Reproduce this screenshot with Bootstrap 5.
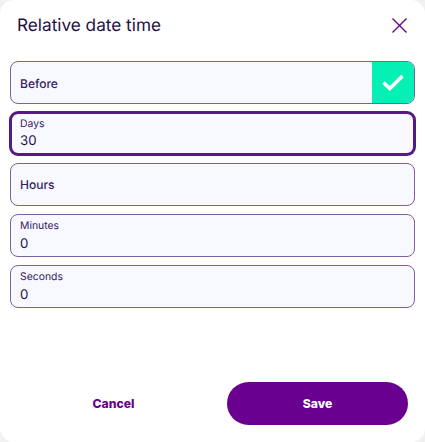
<!DOCTYPE html>
<html lang="en">
<head>
<meta charset="utf-8">
<title>Relative date time</title>
<link href="https://cdn.jsdelivr.net/npm/bootstrap@5.3.0/dist/css/bootstrap.min.css" rel="stylesheet">
<style>
html, body { height: 100%; }
body { background: #f1f1f1; font-family: Inter, "Liberation Sans", sans-serif; color: #1f1147; overflow: hidden; text-rendering: geometricPrecision; -webkit-font-smoothing: antialiased; }
.dlg { height: 442px; background: #fff; border-radius: 14px; padding: 0 10px 17px 10px; }
.dlg-head { height: 61px; padding: 0 7px 10px 7px; }
.dlg-title { font-size: 17.2px; font-weight: 400; line-height: 24px; margin: 0; color: #1f1147; }
.x-btn { background: none; border: 0; padding: 0; line-height: 0; }
.fld { height: 43px; background: #f8f8ff; border: 1px solid #7f5fa3; border-radius: 8px; padding-left: 9px; font-size: 12px; font-weight: 500; color: #35205f; overflow: hidden; flex: none; }
.fld-plain { padding-top: 1px; }
.fld-txt { margin-top: 2px; }
.fld-active { border: 2px solid #561a86; box-shadow: 0 0 0 1px #561a86; padding-left: 8px; }
.fld-lbl { font-size: 10.4px; font-weight: 400; line-height: 14px; color: #35205f; }
.fld-val { font-size: 13.2px; font-weight: 400; line-height: 18px; color: #1f1147; margin-top: 2px; }
.fld-active .fld-val { margin-top: 1px; }
.fld-stack { gap: 8px; }
.chk { width: 42px; background: #05f0b4; }
.btn-row { padding: 0 7px 0 13px; }
.btn-cancel { width: 181px; height: 43px; padding: 1px 0 0; font-size: 12.2px; font-weight: 800; color: #6a008f; background: none; border: 0; }
.btn-save { width: 181px; height: 43px; padding: 1px 0 0; font-size: 12.2px; font-weight: 800; color: #fff; background: #6a008f; border: 0; border-radius: 22px; }
.btn-save:hover { background: #6a008f; color: #fff; }
</style>
</head>
<body>
<div class="dlg d-flex flex-column">
  <div class="dlg-head d-flex align-items-center justify-content-between">
    <h1 class="dlg-title">Relative date time</h1>
    <button class="x-btn" type="button" aria-label="Close">
      <svg width="17" height="17" viewBox="0 0 17 17"><path d="M1.5 1.5 15.5 15.5M15.5 1.5 1.5 15.5" stroke="#6a008f" stroke-width="1.4" fill="none"/></svg>
    </button>
  </div>
  <div class="d-flex flex-column fld-stack">
    <div class="fld d-flex align-items-center justify-content-between pe-0 py-0">
      <span class="fld-txt">Before</span>
      <span class="chk h-100 d-flex align-items-center justify-content-center">
        <svg width="22" height="17" viewBox="0 0 22 17"><path d="M1.5 8.5 7.8 14.6 20.5 2" stroke="#fff" stroke-width="3.6" fill="none"/></svg>
      </span>
    </div>
    <div class="fld fld-active d-flex flex-column justify-content-center">
      <span class="fld-lbl">Days</span>
      <span class="fld-val">30</span>
    </div>
    <div class="fld fld-plain d-flex align-items-center"><span>Hours</span></div>
    <div class="fld d-flex flex-column justify-content-center">
      <span class="fld-lbl">Minutes</span>
      <span class="fld-val">0</span>
    </div>
    <div class="fld d-flex flex-column justify-content-center">
      <span class="fld-lbl">Seconds</span>
      <span class="fld-val">0</span>
    </div>
  </div>
  <div class="btn-row d-flex justify-content-between align-items-center mt-auto">
    <button class="btn-cancel" type="button">Cancel</button>
    <button class="btn btn-save" type="button">Save</button>
  </div>
</div>
</body>
</html>
